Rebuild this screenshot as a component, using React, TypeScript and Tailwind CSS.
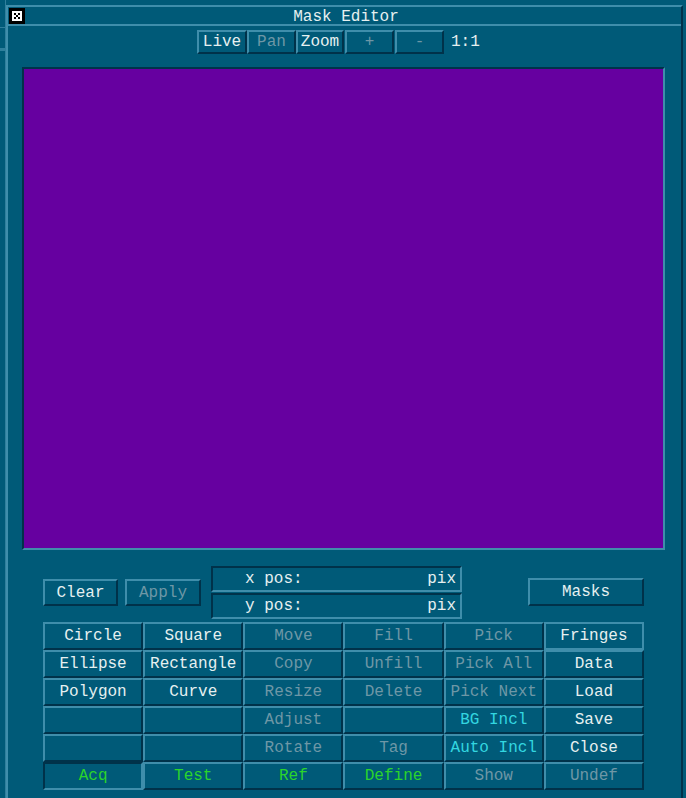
import React from "react";

type Tone = "on" | "off" | "green" | "cyan";

const toneClass: Record<Tone, string> = {
  on: "text-[#e6f0f0]",
  off: "text-[#6e97a6]",
  green: "text-[#2bd42b]",
  cyan: "text-[#33d6e0]",
};

const raised = "border-2 border-t-[#3f8eab] border-l-[#3f8eab] border-b-[#00324a] border-r-[#00324a]";
const sunken = "border-2 border-t-[#00324a] border-l-[#00324a] border-b-[#3f8eab] border-r-[#3f8eab]";

type Cell = { label?: string; tone?: Tone; style?: "raised" | "sunken" | "lit" };

const grid: Cell[][] = [
  [
    { label: "Circle" },
    { label: "Square" },
    { label: "Move", tone: "off" },
    { label: "Fill", tone: "off" },
    { label: "Pick", tone: "off" },
    { label: "Fringes", style: "lit" },
  ],
  [
    { label: "Ellipse" },
    { label: "Rectangle" },
    { label: "Copy", tone: "off" },
    { label: "Unfill", tone: "off" },
    { label: "Pick All", tone: "off" },
    { label: "Data" },
  ],
  [
    { label: "Polygon" },
    { label: "Curve" },
    { label: "Resize", tone: "off" },
    { label: "Delete", tone: "off" },
    { label: "Pick Next", tone: "off" },
    { label: "Load" },
  ],
  [{}, {}, { label: "Adjust", tone: "off" }, {}, { label: "BG Incl", tone: "cyan" }, { label: "Save" }],
  [{}, {}, { label: "Rotate", tone: "off" }, { label: "Tag", tone: "off" }, { label: "Auto Incl", tone: "cyan" }, { label: "Close" }],
  [
    { label: "Acq", tone: "green", style: "sunken" },
    { label: "Test", tone: "green" },
    { label: "Ref", tone: "green" },
    { label: "Define", tone: "green" },
    { label: "Show", tone: "off" },
    { label: "Undef", tone: "off" },
  ],
];

function Btn({ label, tone = "on", className = "" }: { label: string; tone?: Tone; className?: string }) {
  return (
    <div className={`${raised} flex items-center justify-center ${toneClass[tone]} ${className}`}>{label}</div>
  );
}

function GridCell({ cell }: { cell: Cell }) {
  const border =
    cell.style === "sunken" ? sunken : cell.style === "lit" ? "border-2 border-[#3f8eab]" : raised;
  return (
    <div className={`${border} flex h-[28px] items-center justify-center ${toneClass[cell.tone ?? "on"]}`}>
      {cell.label ?? ""}
    </div>
  );
}

export default function App() {
  return (
    <div
      className="relative flex h-[798px] w-[686px] overflow-hidden bg-[#005a78] text-[16px] leading-none"
      style={{ fontFamily: '"Liberation Mono", "DejaVu Sans Mono", monospace' }}
    >
      {/* desktop edge behind the window */}
      <div className="flex w-[6px] flex-col border-r border-[#2f7f9c]">
        <div className="h-[27px]" />
        <div className="h-px bg-[#2f7f9c]" />
        <div className="h-[20px]" />
        <div className="h-[3px] bg-[#2f7f9c]" />
      </div>

      <div className="mt-[5px] flex h-[793px] w-[677px] flex-col border-l-2 border-t-2 border-r-2 border-l-[#3f8eab] border-t-[#3f8eab] border-r-[#00324a]">
        {/* title bar */}
        <div className="flex h-[19px] items-center border-b-2 border-[#3f8eab]">
          <div className="ml-[1px] flex h-[16px] w-[16px] items-center justify-center bg-black">
            <svg width="10" height="10" viewBox="0 0 10 10">
              <rect x="0" y="0" width="10" height="10" fill="#fff" />
              <rect x="2" y="2" width="2" height="2" fill="#000" />
              <rect x="6" y="2" width="2" height="2" fill="#000" />
              <rect x="4" y="4" width="2" height="2" fill="#000" />
              <rect x="2" y="6" width="2" height="2" fill="#000" />
              <rect x="6" y="6" width="2" height="2" fill="#000" />
            </svg>
          </div>
          <div className="flex-1 pr-[14px] pt-[2px] text-center text-[#e6f0f0]">Mask Editor</div>
        </div>

        {/* toolbar */}
        <div className="mt-[4px] flex h-[24px] items-stretch pl-[189px]">
          <Btn label="Live" className="w-[50px]" />
          <Btn label="Pan" tone="off" className="w-[49px]" />
          <Btn label="Zoom" className="w-[48px]" />
          <Btn label="+" tone="off" className="ml-[1px] w-[49px]" />
          <Btn label="-" tone="off" className="ml-[1px] w-[49px]" />
          <div className="ml-[7px] flex items-center text-[#e6f0f0]">1:1</div>
        </div>

        {/* canvas */}
        <div className="ml-[14px] mt-[13px] h-[483px] w-[643px] border-2 border-t-[#00324a] border-l-[#00324a] border-b-[#3f8eab] border-r-[#3f8eab] bg-[#6600a0]" />

        {/* position / actions */}
        <div className="mt-[16px] flex items-start pl-[35px]">
          <div className="mt-[13px] flex gap-[7px]">
            <Btn label="Clear" className="h-[27px] w-[75px]" />
            <Btn label="Apply" tone="off" className="h-[27px] w-[76px]" />
          </div>
          <div className="ml-[10px] flex w-[251px] flex-col gap-[1px]">
            <div className={`${sunken} flex h-[26px] items-center justify-between pl-[32px] pr-[4px] text-[#e6f0f0]`}>
              <span>x pos:</span>
              <span>pix</span>
            </div>
            <div className={`${sunken} flex h-[26px] items-center justify-between pl-[32px] pr-[4px] text-[#e6f0f0]`}>
              <span>y pos:</span>
              <span>pix</span>
            </div>
          </div>
          <div className="ml-[66px] mt-[12px]">
            <Btn label="Masks" className="h-[28px] w-[116px]" />
          </div>
        </div>

        {/* tool grid */}
        <div className="ml-[35px] mt-[3px] grid w-[601px] grid-cols-6">
          {grid.flat().map((cell, i) => (
            <GridCell key={i} cell={cell} />
          ))}
        </div>
      </div>
    </div>
  );
}
